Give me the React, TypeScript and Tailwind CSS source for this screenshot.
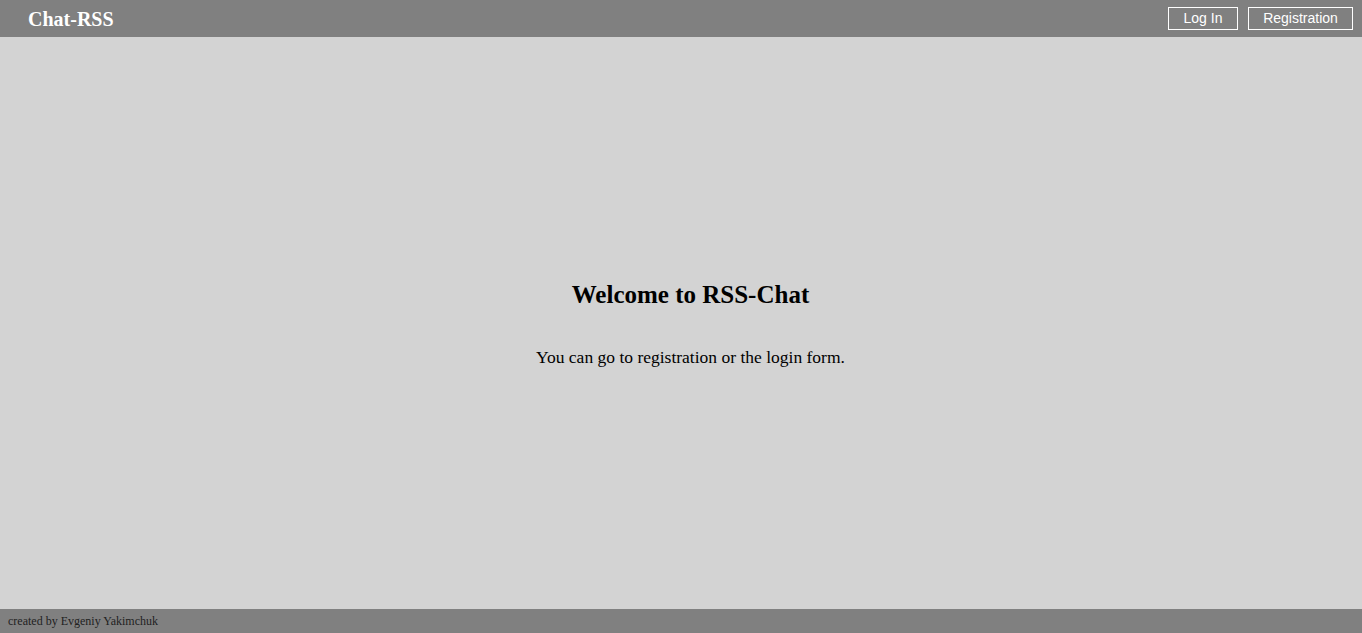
export default function App() {
  return (
    <div className="flex h-[633px] flex-col bg-[#d3d3d3] font-['Liberation_Serif',serif]">
      <header className="flex h-[37px] shrink-0 items-center justify-between bg-[#808080] pl-[28px] pr-[9px]">
        <h1 className="text-[20px] font-bold text-white">Chat-RSS</h1>
        <nav className="flex gap-[10px]">
          <button className="h-[23px] w-[70px] border border-white font-['Liberation_Sans',sans-serif] text-[14px] text-white">
            Log In
          </button>
          <button className="h-[23px] w-[105px] border border-white font-['Liberation_Sans',sans-serif] text-[14px] text-white">
            Registration
          </button>
        </nav>
      </header>
      <main className="flex flex-1 flex-col items-center justify-center pl-[19px]">
        <h2 className="text-[25px] font-bold text-black">Welcome to RSS-Chat</h2>
        <p className="mt-[31px] text-[17.5px] text-black">You can go to registration or the login form.</p>
      </main>
      <footer className="flex h-[24px] shrink-0 items-center bg-[#808080] px-[8px] text-[12px] text-[#222]">
        created by Evgeniy Yakimchuk
      </footer>
    </div>
  );
}
